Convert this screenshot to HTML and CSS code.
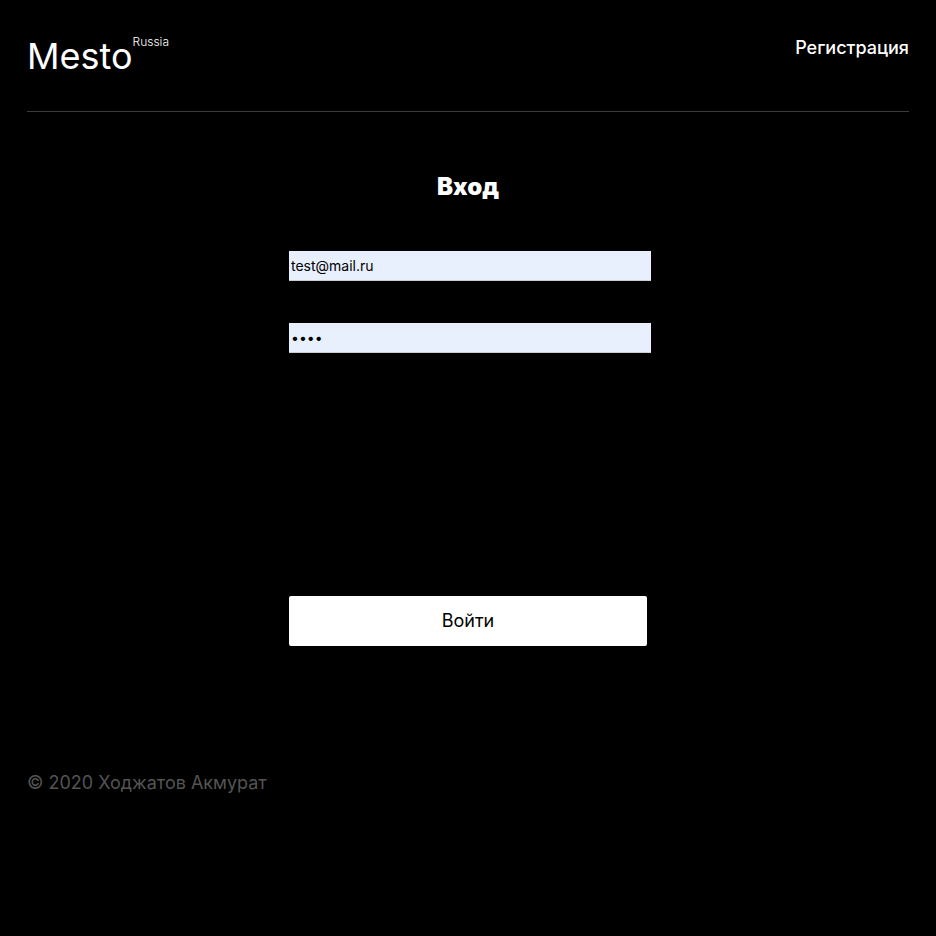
FILE: index.html
```html
<!DOCTYPE html>
<html lang="ru">
<head>
<meta charset="utf-8">
<meta name="viewport" content="width=device-width, initial-scale=1">
<title>Mesto</title>
<link rel="stylesheet" href="styles.css">
</head>
<body>
<div class="page">
  <header class="header">
    <a class="logo" href="#"><span class="logo__name">Mesto</span><span class="logo__region">Russia</span></a>
    <a class="header__link" href="#">Регистрация</a>
  </header>
  <main class="content">
    <form class="login">
      <h1 class="login__title">Вход</h1>
      <input class="login__input" type="email" aria-label="Email" value="test@mail.ru">
      <input class="login__input" type="password" aria-label="Пароль" value="test">
      <button class="login__button" type="button">Войти</button>
    </form>
  </main>
  <footer class="footer">
    <p class="footer__copyright">© 2020 Ходжатов Акмурат</p>
  </footer>
</div>
</body>
</html>
```

FILE: styles.css
```css
* {
  box-sizing: border-box;
}

body {
  margin: 0;
  min-height: 100vh;
  background: #000;
  color: #fff;
  font-family: Inter, "Liberation Sans", sans-serif;
}

.page {
  max-width: 882px;
  margin: 0 27px;
}

.header {
  display: flex;
  justify-content: space-between;
  align-items: flex-start;
  padding: 36px 0 34px;
  border-bottom: 1px solid rgba(84, 84, 84, 0.7);
}

.logo {
  display: flex;
  align-items: flex-start;
  color: #fff;
  text-decoration: none;
}

.logo__name {
  font-size: 36px;
  line-height: 41px;
}

.logo__region {
  font-size: 12px;
  font-weight: 300;
  line-height: 12px;
}

.header__link {
  color: #fff;
  font-size: 18px;
  font-weight: 500;
  line-height: 24px;
  text-decoration: none;
}

.login {
  display: flex;
  flex-direction: column;
  max-width: 358px;
  margin: 60px auto 0;
}

.login__title {
  margin: 0 0 50px;
  font-size: 24px;
  font-weight: 900;
  line-height: 29px;
  text-align: center;
}

.login__input {
  width: calc(100% + 4px);
  height: 30px;
  margin: 0 0 42px;
  padding: 0 2px;
  border: 0;
  border-bottom: 1px solid #ccc;
  border-radius: 0;
  background: #e8f0fe;
  color: #000;
  font-family: inherit;
  font-size: 14px;
}

.login__button {
  height: 50px;
  margin-top: 201px;
  padding: 0 0 2px;
  border: 0;
  border-radius: 2px;
  background: #fff;
  color: #000;
  font-family: inherit;
  font-size: 18px;
}

.footer {
  padding: 126px 0 60px;
}

.footer__copyright {
  margin: 0;
  color: #545454;
  font-size: 18px;
  line-height: 22px;
}
```
